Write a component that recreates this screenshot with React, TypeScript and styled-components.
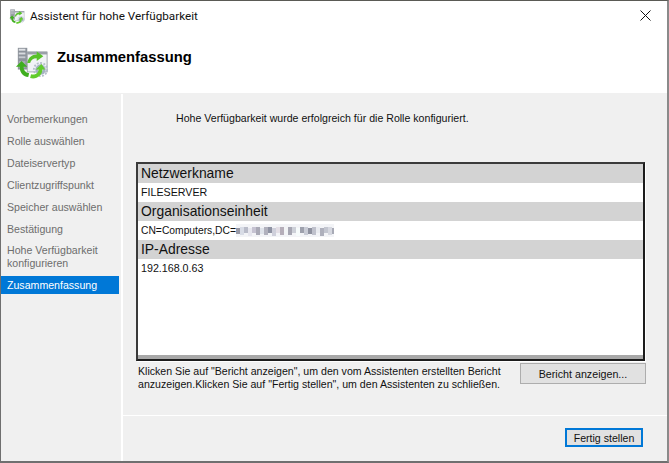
import React from "react";
import styled, { createGlobalStyle } from "styled-components";

const Global = createGlobalStyle`
  html, body { margin: 0; padding: 0; background: #fff; overflow: hidden; }
  #root { width: 669px; height: 463px; }
`;

const Win = styled.div`
  width: 669px; height: 463px; box-sizing: border-box;
  display: flex; flex-direction: column;
  background: #fff;
  border-left: 1px solid #6f6f6f;
  border-right: 2px solid #8a8a8a;
  border-top: 1px solid #5a5a55;
  border-bottom: 2px solid #6f6f6f;
  font-family: "Liberation Sans", Arial, sans-serif;
  color: #111;
`;
const TitleBar = styled.div`
  height: 29px; display: flex; align-items: center; padding: 0 16px 0 8px; gap: 5px; flex: none;
`;
const TitleText = styled.div`
  font-family: "Roboto", sans-serif; font-size: 11.7px; flex: 1; color: #111;
`;
const Header = styled.div`
  height: 64px; flex: none; display: flex; align-items: flex-start; padding: 15px 0 0 14px; gap: 8px;
  border-bottom: 1px solid #f0f0f0;
  box-sizing: border-box;
`;
const Heading = styled.div`
  font-size: 14.8px; font-weight: 700; color: #000; line-height: 18px; margin-top: 3px;
`;
const Main = styled.div`
  flex: 1; display: flex; min-height: 0;
`;
const Sidebar = styled.nav`
  width: 120px; flex: none; background: #f0f0f0; padding-top: 16px; box-sizing: border-box;
  margin-right: 2px; display: flex; flex-direction: column;
`;
const Step = styled.div<{ $active?: boolean; $tall?: boolean }>`
  height: ${p => (p.$tall ? 30 : 18)}px; margin-bottom: 4px; padding-left: 6px;
  margin-right: 2px;
  font-size: 10.6px; line-height: 13px; display: flex; align-items: center;
  color: ${p => (p.$active ? "#fff" : "#6d6d6d")};
  background: ${p => (p.$active ? "#0078d7" : "transparent")};
`;
const Content = styled.div`
  flex: 1; min-width: 0; display: flex; flex-direction: column; background: #f0f0f0;
`;
const Body = styled.div`
  flex: 1; display: flex; flex-direction: column; padding: 15px 21px 0 13px; min-height: 0;
  border-bottom: 1px solid #fff;
`;
const Success = styled.div`
  font-size: 10.6px; line-height: 18px; padding-left: 40px; height: 18px; color: #111;
`;
const Report = styled.div`
  margin: 35px 1px 0 0; height: 199px; box-sizing: border-box; background: #fff; flex: none;
  border: 2px solid #3a3a3a; border-right-color: #1c1c1c; border-bottom-color: #1c1c1c;
  display: flex; flex-direction: column;
  box-shadow: 1px 1px 0 #fff, inset 0 -4px 0 #a8a8a8;
`;
const Cat = styled.div`
  height: 19px; background: #d3d3d3; font-size: 13.9px; line-height: 19px; padding-left: 3px; color: #111; flex: none;
`;
const Val = styled.div<{ $narrow?: boolean }>`
  height: 19px; background: #fff; font-size: ${p => (p.$narrow ? 10.3 : 10.7)}px; line-height: 19px; padding-left: 3px; flex: none; display: flex; align-items: center; color: #111;
`;
const Below = styled.div`
  display: flex; margin-top: 2px; padding-left: 2px; align-items: flex-start; justify-content: space-between;
`;
const Hint = styled.div`
  font-size: 10.6px; line-height: 13px; width: 378px; padding-top: 2px; color: #111;
`;
const Btn = styled.button`
  font-family: inherit; font-size: 10.7px; color: #111; background: #e1e1e1; border: 1px solid #adadad;
  width: 126px; height: 21px; padding: 0; flex: none;
`;
const Footer = styled.div`
  height: 45px; flex: none; display: flex; justify-content: flex-end; padding: 12px 24px 0 0; box-sizing: border-box;
`;
const Primary = styled.button`
  font-family: inherit; font-size: 10.6px; color: #111; background: #e1e1e1; border: 2px solid #0078d7;
  width: 78px; height: 19px; padding: 0; box-sizing: border-box;
`;

const blocks = "9a9aa6,d8dce6,b9bcc9,e6e6ee,c6c3d2,a9a9b6,dfe3ea,b1b1bd,8f93a3,cfd0db,e4dfe6,b5aeb9,f2f4f6,a6a6b2,cdd0d8,f6fbfb,9ea1ad,c9ccd6,8e919f,bfc1cc,e9ebf0,aeb0bc,c3c6d0,d6d8e0,a8aab6".split(",");
const Blur = () => (
  <svg width="98" height="13" viewBox="0 0 98 13" aria-hidden="true">
    <rect width="98" height="13" fill="#f3f4f7" />
    {blocks.map((c, i) => (
      <rect key={i} x={i * 4} y={i % 3 === 0 ? 4 : 3} width="4" height={i % 2 ? 8 : 6} fill={`#${c}`} />
    ))}
  </svg>
);

const WizardIcon = ({ s }: { s: number }) => (
  <svg width={s} height={s} viewBox="0 0 36 36" aria-hidden="true">
    <rect x="3" y="3" width="10" height="23" fill="#8d939b" />
    <rect x="4" y="4" width="7" height="2" fill="#e2e4e8" />
    <rect x="4" y="8" width="7" height="2" fill="#d8dbe0" />
    <rect x="4" y="12" width="7" height="2" fill="#c5c9cf" />
    <rect x="4" y="17" width="7" height="7" fill="#a8adb4" />
    <rect x="13" y="7.5" width="21" height="21" fill="#f1f3f6" stroke="#a2a7ae" />
    <rect x="13" y="7" width="21" height="3" fill="#9aa0a8" />
    <g stroke="#b5bfcb" strokeWidth="2" strokeDasharray="2 1.6" fill="none">
      <circle cx="27" cy="26" r="7" />
    </g>
    <circle cx="27" cy="26" r="5.5" fill="#a4b2c2" />
    <circle cx="27" cy="26" r="2.5" fill="#eef2f6" />
    <path d="M13 19 C14 13 18 10 23 10 L23 7 L30 12 L23 17 L23 14 C19 14 17 16 16 19 Z" fill="#58c22a" />
    <path d="M1 23 L7 17 L13 23 L9 23 C9 27 11 29 15 30 L14 34 C8 33 5 29 5 23 Z" fill="#3fae1f" />
    <path d="M16 35 L17 31 C21 32 25 30 25 26 L22 26 L28 20 L32 26 L29 26 C29 32 23 37 16 35 Z" fill="#62cc2c" />
  </svg>
);

const steps = ["Vorbemerkungen", "Rolle auswählen", "Dateiservertyp", "Clientzugriffspunkt", "Speicher auswählen", "Bestätigung"];

export default function App() {
  return (
    <Win>
      <Global />
      <TitleBar>
        <WizardIcon s={16} />
        <TitleText>Assistent für hohe Verfügbarkeit</TitleText>
        <svg width="11" height="11" viewBox="0 0 11 11" aria-hidden="true">
          <path d="M.5.5l10 10M10.5.5l-10 10" stroke="#111" strokeWidth="1" fill="none" />
        </svg>
      </TitleBar>
      <Header>
        <WizardIcon s={34} />
        <Heading>Zusammenfassung</Heading>
      </Header>
      <Main>
        <Sidebar>
          {steps.map(s => <Step key={s}>{s}</Step>)}
          <Step $tall>Hohe Verfügbarkeit<br />konfigurieren</Step>
          <Step $active>Zusammenfassung</Step>
        </Sidebar>
        <Content>
          <Body>
            <Success>Hohe Verfügbarkeit wurde erfolgreich für die Rolle konfiguriert.</Success>
            <Report>
              <Cat>Netzwerkname</Cat>
              <Val>FILESERVER</Val>
              <Cat>Organisationseinheit</Cat>
              <Val $narrow>CN=Computers,DC=<Blur /></Val>
              <Cat>IP-Adresse</Cat>
              <Val>192.168.0.63</Val>
            </Report>
            <Below>
              <Hint>Klicken Sie auf "Bericht anzeigen", um den vom Assistenten erstellten Bericht anzuzeigen.Klicken Sie auf "Fertig stellen", um den Assistenten zu schließen.</Hint>
              <Btn>Bericht anzeigen...</Btn>
            </Below>
          </Body>
          <Footer>
            <Primary>Fertig stellen</Primary>
          </Footer>
        </Content>
      </Main>
    </Win>
  );
}
